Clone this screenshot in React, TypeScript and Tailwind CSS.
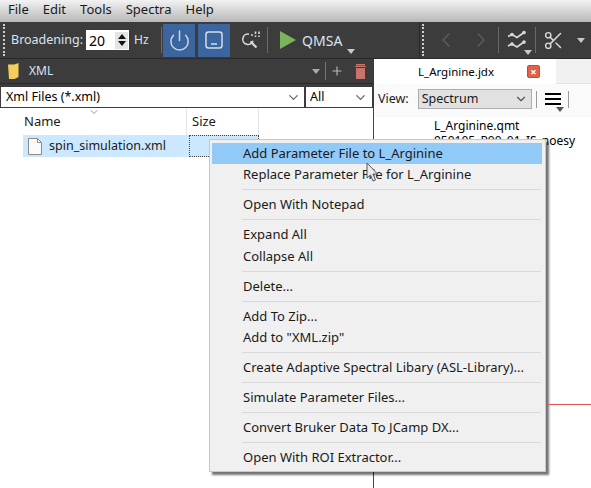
import React from "react";
import { ChevronDown, ChevronLeft, ChevronRight, Power, Scissors, Plus } from "lucide-react";

const Sep = () => <div className="w-px h-[26px] bg-[#6a6a6a] shrink-0" />;
const Caret = ({ c = "#c8c8c8" }: { c?: string }) => (
  <svg width="8" height="5" viewBox="0 0 8 5"><path d="M0 0h8L4 5z" fill={c} /></svg>
);

const groups: string[][] = [
  ["Add Parameter File to L_Arginine", "Replace Parameter File for L_Arginine"],
  ["Open With Notepad"],
  ["Expand All", "Collapse All"],
  ["Delete..."],
  ["Add To Zip...", 'Add to "XML.zip"'],
  ["Create Adaptive Spectral Libary (ASL-Library)..."],
  ["Simulate Parameter Files..."],
  ["Convert Bruker Data To JCamp DX..."],
  ["Open With ROI Extractor..."],
];

function ContextMenu() {
  return (
    <div className="absolute left-[209px] top-[139px] w-[337px] h-[333px] bg-[#f0f0f0] border border-[#c8c8c8] pt-[2.5px] pl-[2px] pr-[3px] shadow-[3px_3px_2px_rgba(0,0,0,0.55)] text-[13px] text-[#1a1a1a]">
      {groups.map((g, i) => (
        <div key={i}>
          {i > 0 && <div className="h-[1px] my-[3.75px] ml-[30px] mr-[1px] bg-[#d9d9d9]" />}
          {g.map((t, j) => (
            <div key={j} className={`h-[21.5px] leading-[21.5px] pl-[31px] whitespace-nowrap ${i === 0 && j === 0 ? "bg-[#91c9f7]" : ""}`}>{t}</div>
          ))}
        </div>
      ))}
    </div>
  );
}

export default function App() {
  return (
    <div className="relative w-[591px] h-[488px] overflow-hidden bg-white font-['Noto_Sans','Open_Sans',sans-serif] text-[13px] text-[#1a1a1a]">
      <div className="h-[22px] flex items-center pl-[8px] gap-[14px] bg-gradient-to-b from-[#f2f2f2] to-[#b8b8b8] text-[13px] leading-none pb-[3px]">
        <span>File</span><span>Edit</span><span>Tools</span><span>Spectra</span><span>Help</span>
      </div>

      <div className="h-[37px] flex items-center bg-[#3c3c3c] text-[#d8e4f0] border-b border-[#2a2a2a]">
        <div className="w-[2px] h-[32px] ml-[3px] border-l-2 border-dotted border-[#cfcfcf] shrink-0" />
        <span className="ml-[6px] text-[12.5px]">Broadening:</span>
        <div className="ml-[3px] w-[43px] h-[20px] bg-white text-black flex items-center justify-between pl-[3px] pr-[1px] shrink-0">
          <span className="text-[14px]">20</span>
          <div className="flex flex-col items-center gap-[2px] w-[13px] h-[17px] bg-[#e4e4e4] justify-center">
            <svg width="8" height="5" viewBox="0 0 8 5"><path d="M4 0l4 5H0z" fill="#111" /></svg>
            <svg width="8" height="5" viewBox="0 0 8 5"><path d="M0 0h8L4 5z" fill="#111" /></svg>
          </div>
        </div>
        <span className="ml-[5px] text-[12px] w-[15px]">Hz</span>
        <div className="ml-[12px]"><Sep /></div>
        <div className="ml-[1px] w-[32px] h-[33px] bg-[#3a659f] flex items-center justify-center shrink-0">
          <Power size={23} strokeWidth={1.6} color="#c9d3df" />
        </div>
        <div className="ml-[3px] w-[32px] h-[33px] bg-[#3a659f] flex items-center justify-center shrink-0">
          <svg width="20" height="20" viewBox="0 0 20 20" fill="none" stroke="#d4dde8" strokeWidth="1.5">
            <rect x="2" y="2" width="16" height="16" rx="2.5" />
            <path d="M7 14h6" />
          </svg>
        </div>
        <div className="ml-[10px] w-[20px] h-[24px] flex items-center justify-center shrink-0">
          <svg width="20" height="20" viewBox="0 0 20 20" fill="none" stroke="#d8d8d8" strokeWidth="1.6">
            <path d="M9 4.2a5.2 5.2 0 1 0 4 6.5" />
            <path d="M10.5 11.5l6 6" strokeWidth="2.2" />
            <path d="M11 5h2M15.5 1.5v2.5M19 1.5v2.5M15.5 5.5v1.5M19 5.5v1.5" />
          </svg>
        </div>
        <div className="ml-[7px]"><Sep /></div>
        <svg className="ml-[12px] shrink-0" width="16" height="18" viewBox="0 0 16 18"><path d="M0 0l16 9L0 18z" fill="#7db35c" /></svg>
        <span className="ml-[6px] text-[14px] relative">QMSA
          <span className="absolute left-[45px] top-[19px] flex"><Caret /></span>
        </span>
        <div className="ml-auto w-px h-[36px] bg-[#2a2a2a] shrink-0" />
        <div className="w-[2px] h-[32px] ml-[2px] border-l-2 border-dotted border-[#cfcfcf] shrink-0" />
        <ChevronLeft className="ml-[10px] shrink-0" size={24} strokeWidth={1.4} color="#5f5f5f" />
        <ChevronRight className="ml-[11px] shrink-0" size={24} strokeWidth={1.4} color="#5f5f5f" />
        <div className="ml-[5px]"><Sep /></div>
        <div className="relative ml-[8px] w-[20px] h-[24px] shrink-0">
          <svg width="20" height="24" viewBox="0 0 20 24" fill="none" stroke="#d8d8d8" strokeWidth="1.7">
            <path d="M1 8.5l4-2 5 3 7-5" />
            <path d="M1 18l4-2 5 3 7-5" />
            <circle cx="5" cy="6.5" r="1" fill="#d8d8d8" /><circle cx="17" cy="4.5" r="1" fill="#d8d8d8" />
            <circle cx="5" cy="16" r="1" fill="#d8d8d8" /><circle cx="17" cy="14" r="1" fill="#d8d8d8" />
          </svg>
          <span className="absolute left-[17px] top-[22px] flex"><Caret /></span>
        </div>
        <div className="ml-[8px]"><Sep /></div>
        <Scissors className="ml-[7px] shrink-0" size={21} strokeWidth={1.7} color="#d8d8d8" />
        <span className="ml-[13px] mr-[6px] flex"><Caret /></span>
      </div>

      <div className="flex h-[429px]">
        <div className="w-[374px] flex flex-col shrink-0">
          <div className="h-[25px] bg-[#3c3c3c] flex items-center text-[#d8e4f0] text-[12px] border-b border-[#2a2a2a]">
            <svg className="ml-[8px] shrink-0" width="11" height="16" viewBox="0 0 11 16"><path d="M0 1.5h6.5L10.5 0v14l-4 2H1z" fill="#f4cd5d" /></svg>
            <span className="ml-[10px]">XML</span>
            <span className="ml-auto flex"><Caret c="#aaa" /></span>
            <div className="ml-[5px] w-px h-[18px] bg-[#777]" />
            <Plus className="ml-[4px] shrink-0" size={14} strokeWidth={2} color="#b5b5b5" />
            <svg className="ml-[11px] mr-[8px] shrink-0" width="11" height="15" viewBox="0 0 11 15"><path d="M1 0h9v1.5H1zM0 2h11v1H0zM1 4h9v11H1z" fill="#c9736a" /></svg>
          </div>
          <div className="h-[24px] bg-[#3c3c3c] flex gap-[2px] items-end pb-[1px]">
            <div className="ml-[1px] w-[303px] h-[20px] bg-white flex items-center justify-between pl-[5px] pr-[3px] text-[12.5px] text-black">
              <span>Xml Files (*.xml)</span><ChevronDown size={15} color="#666" />
            </div>
            <div className="w-[66px] h-[20px] bg-white flex items-center justify-between pl-[4px] pr-[4px] text-[12.5px] text-black">
              <span>All</span><ChevronDown size={15} color="#666" />
            </div>
          </div>
          <div className="flex-1 border-r border-[#444] relative">
            <div className="flex h-[27px] items-center">
              <div className="w-[187px] pl-[24px] border-r border-[#e5e5e5] h-full flex items-center relative">
                Name
                <ChevronDown className="absolute left-[88px] -top-[2px]" size={12} color="#999" />
              </div>
              <div className="w-[72px] pl-[5px] border-r border-[#e5e5e5] h-full flex items-center">Size</div>
            </div>
            <div className="flex h-[22px] ml-[23px] w-[236px] bg-[#cce8ff] items-center">
              <svg className="ml-[5px] shrink-0" width="14" height="17" viewBox="0 0 14 17" fill="#fafafa" stroke="#8a8a8a"><path d="M.5.5h9l4 4v12H.5z" /><path d="M9.5.5v4h4" fill="none" /></svg>
              <span className="ml-[7px] text-[12.5px] whitespace-nowrap">spin_simulation.xml</span>
              <div className="ml-auto w-[70px] h-[22px] border border-dotted border-[#444] shrink-0" />
            </div>
          </div>
        </div>
        <div className="flex-1 flex flex-col min-w-0">
          <div className="flex h-[25px] items-stretch">
            <div className="w-[182px] bg-white flex items-center text-[11.5px] text-black relative">
              <span className="ml-[44px]">L_Arginine.jdx</span>
              <div className="absolute left-[153px] top-[6px] w-[13px] h-[13px] bg-[#e0604a] border border-[#c74a36] rounded-[2px] flex items-center justify-center text-white text-[11px] font-bold leading-none">×</div>
            </div>
            <div className="flex-1 bg-[#f1f1f1] border-b border-[#e4e4e4]" />
          </div>
          <div className="h-[33px] flex items-center bg-[#fafafa] text-[12.5px] pl-[4px] pb-[3px]">
            <span>View:</span>
            <div className="ml-[9px] w-[114px] h-[20px] bg-[#e1e1e1] border border-[#adadad] flex items-center justify-between px-[3px] shrink-0">
              <span>Spectrum</span><ChevronDown size={14} color="#555" />
            </div>
            <div className="ml-[4px] w-px h-[17px] bg-[#999] shrink-0" />
            <div className="relative ml-[8px] w-[16px] h-[12px] flex flex-col justify-between shrink-0">
              <div className="h-[2px] bg-black" /><div className="h-[2px] bg-black" /><div className="h-[2px] bg-black" />
              <span className="absolute left-[11px] top-[14px] flex"><Caret c="#555" /></span>
            </div>
            <div className="ml-[7px] w-px h-[17px] bg-[#999] shrink-0" />
          </div>
          <div className="pl-[60px] pt-[1px] text-[12px] leading-[15px] text-black whitespace-nowrap">
            <div>L_Arginine.qmt</div>
            <div>950105_P00_01_IS_noesy</div>
          </div>
        </div>
      </div>

      <ContextMenu />
      <div className="absolute left-[547px] top-[404px] w-[44px] h-px bg-[#e0544f]" />
      <svg className="absolute left-[366px] top-[162px]" width="13" height="20" viewBox="0 0 13 20">
        <path d="M1 1v15l3.5-3 2.5 6 2.5-1-2.5-6h4.5z" fill="#eaeaea" stroke="#555" strokeWidth="1" />
      </svg>
    </div>
  );
}
